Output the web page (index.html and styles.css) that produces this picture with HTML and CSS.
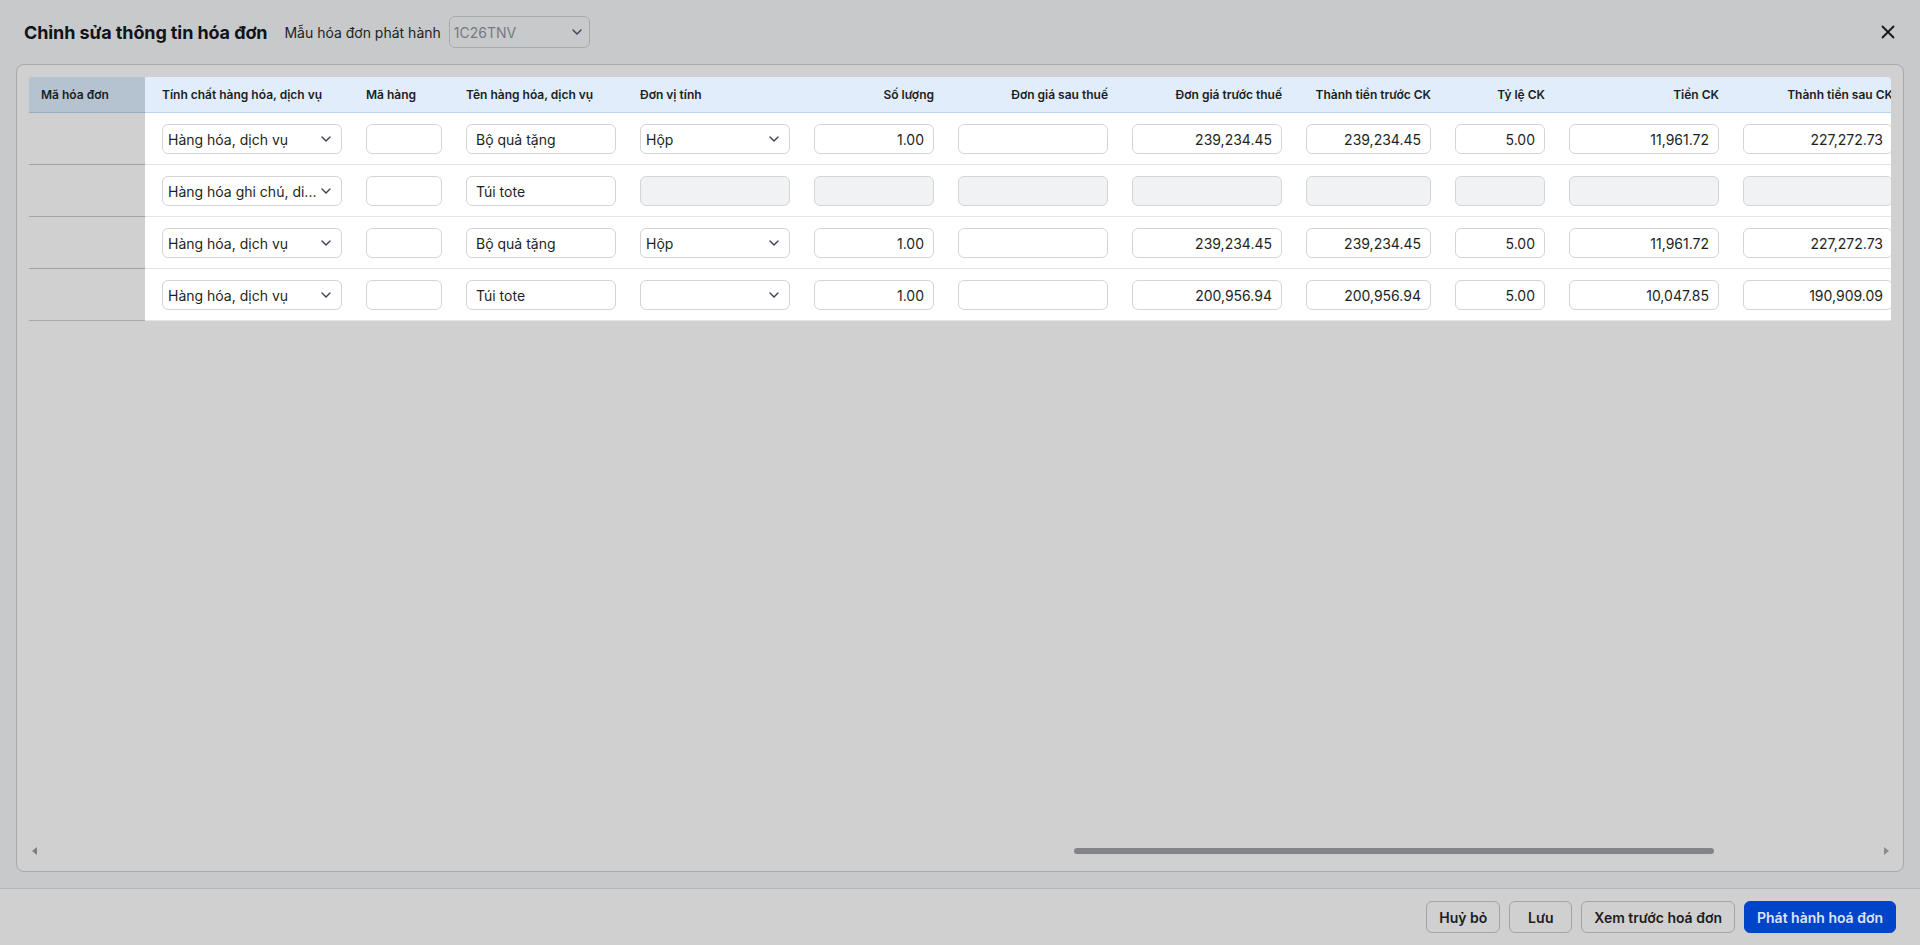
FILE: index.html
```html
<!DOCTYPE html>
<html lang="vi">
<head>
<meta charset="utf-8">
<title>Chỉnh sửa thông tin hóa đơn</title>
<link rel="stylesheet" href="styles.css">
</head>
<body>
<div class="app">
  <header class="top">
    <h1 class="title">Chỉnh sửa thông tin hóa đơn</h1>
    <span class="label">Mẫu hóa đơn phát hành</span>
    <div class="sel sel-template"><span>1C26TNV</span><svg class="chev" width="10" height="6" viewBox="0 0 10 6"><path d="M1 1l4 4 4-4" fill="none" stroke="#374151" stroke-width="1.4" stroke-linecap="round" stroke-linejoin="round"/></svg></div>
    <button class="close" aria-label="Đóng"><svg width="14" height="14" viewBox="0 0 14 14"><path d="M1.5 1.5l11 11M12.5 1.5l-11 11" stroke="#15171a" stroke-width="1.8" stroke-linecap="round"/></svg></button>
  </header>

  <main class="panel">
    <div class="grid-wrap">
      <table class="grid">
        <colgroup>
          <col class="col-fixed">
          <col class="col-kind">
          <col class="col-code">
          <col class="col-w174">
          <col class="col-w174">
          <col class="col-qty">
          <col class="col-w174">
          <col class="col-w174">
          <col class="col-w149">
          <col class="col-rate">
          <col class="col-w174">
          <col class="col-w174">
        </colgroup>
        <thead>
          <tr>
            <th class="fixed">Mã hóa đơn</th>
            <th class="first">Tính chất hàng hóa, dịch vụ</th>
            <th>Mã hàng</th>
            <th>Tên hàng hóa, dịch vụ</th>
            <th>Đơn vị tính</th>
            <th class="num">Số lượng</th>
            <th class="num">Đơn giá sau thuế</th>
            <th class="num">Đơn giá trước thuế</th>
            <th class="num">Thành tiền trước CK</th>
            <th class="num">Tỷ lệ CK</th>
            <th class="num">Tiền CK</th>
            <th class="num">Thành tiền sau CK</th>
          </tr>
        </thead>
        <tbody>
          <tr>
            <td class="fixed"></td>
            <td class="first"><div class="sel"><span class="sel-text">Hàng hóa, dịch vụ</span><svg class="chev" width="10" height="6" viewBox="0 0 10 6"><path d="M1 1l4 4 4-4" fill="none" stroke="#374151" stroke-width="1.4" stroke-linecap="round" stroke-linejoin="round"/></svg></div></td>
            <td><input class="inp" value=""></td>
            <td><input class="inp" value="Bộ quả tặng"></td>
            <td><div class="sel"><span class="sel-text">Hộp</span><svg class="chev" width="10" height="6" viewBox="0 0 10 6"><path d="M1 1l4 4 4-4" fill="none" stroke="#374151" stroke-width="1.4" stroke-linecap="round" stroke-linejoin="round"/></svg></div></td>
            <td><input class="inp num" value="1.00"></td>
            <td><input class="inp num" value=""></td>
            <td><input class="inp num" value="239,234.45"></td>
            <td><input class="inp num" value="239,234.45"></td>
            <td><input class="inp num" value="5.00"></td>
            <td><input class="inp num" value="11,961.72"></td>
            <td><input class="inp num" value="227,272.73"></td>
          </tr>
          <tr>
            <td class="fixed"></td>
            <td class="first"><div class="sel"><span class="sel-text">Hàng hóa ghi chú, di...</span><svg class="chev" width="10" height="6" viewBox="0 0 10 6"><path d="M1 1l4 4 4-4" fill="none" stroke="#374151" stroke-width="1.4" stroke-linecap="round" stroke-linejoin="round"/></svg></div></td>
            <td><input class="inp" value=""></td>
            <td><input class="inp" value="Túi tote"></td>
            <td><div class="inp off"></div></td>
            <td><div class="inp off"></div></td>
            <td><div class="inp off"></div></td>
            <td><div class="inp off"></div></td>
            <td><div class="inp off"></div></td>
            <td><div class="inp off"></div></td>
            <td><div class="inp off"></div></td>
            <td><div class="inp off"></div></td>
          </tr>
          <tr>
            <td class="fixed"></td>
            <td class="first"><div class="sel"><span class="sel-text">Hàng hóa, dịch vụ</span><svg class="chev" width="10" height="6" viewBox="0 0 10 6"><path d="M1 1l4 4 4-4" fill="none" stroke="#374151" stroke-width="1.4" stroke-linecap="round" stroke-linejoin="round"/></svg></div></td>
            <td><input class="inp" value=""></td>
            <td><input class="inp" value="Bộ quả tặng"></td>
            <td><div class="sel"><span class="sel-text">Hộp</span><svg class="chev" width="10" height="6" viewBox="0 0 10 6"><path d="M1 1l4 4 4-4" fill="none" stroke="#374151" stroke-width="1.4" stroke-linecap="round" stroke-linejoin="round"/></svg></div></td>
            <td><input class="inp num" value="1.00"></td>
            <td><input class="inp num" value=""></td>
            <td><input class="inp num" value="239,234.45"></td>
            <td><input class="inp num" value="239,234.45"></td>
            <td><input class="inp num" value="5.00"></td>
            <td><input class="inp num" value="11,961.72"></td>
            <td><input class="inp num" value="227,272.73"></td>
          </tr>
          <tr>
            <td class="fixed"></td>
            <td class="first"><div class="sel"><span class="sel-text">Hàng hóa, dịch vụ</span><svg class="chev" width="10" height="6" viewBox="0 0 10 6"><path d="M1 1l4 4 4-4" fill="none" stroke="#374151" stroke-width="1.4" stroke-linecap="round" stroke-linejoin="round"/></svg></div></td>
            <td><input class="inp" value=""></td>
            <td><input class="inp" value="Túi tote"></td>
            <td><div class="sel"><span class="sel-text"></span><svg class="chev" width="10" height="6" viewBox="0 0 10 6"><path d="M1 1l4 4 4-4" fill="none" stroke="#374151" stroke-width="1.4" stroke-linecap="round" stroke-linejoin="round"/></svg></div></td>
            <td><input class="inp num" value="1.00"></td>
            <td><input class="inp num" value=""></td>
            <td><input class="inp num" value="200,956.94"></td>
            <td><input class="inp num" value="200,956.94"></td>
            <td><input class="inp num" value="5.00"></td>
            <td><input class="inp num" value="10,047.85"></td>
            <td><input class="inp num" value="190,909.09"></td>
          </tr>
        </tbody>
      </table>
    </div>

    <div class="hscroll">
      <span class="arrow-left"></span>
      <div class="track"><div class="thumb" style="margin-left:1032px;width:640px"></div></div>
      <span class="arrow-right"></span>
    </div>
  </main>

  <footer class="foot">
    <button class="btn">Huỷ bỏ</button>
    <button class="btn">Lưu</button>
    <button class="btn">Xem trước hoá đơn</button>
    <button class="btn primary">Phát hành hoá đơn</button>
  </footer>
</div>
</body>
</html>
```

FILE: styles.css
```css
* { box-sizing: border-box; }

body {
  margin: 0;
  font-family: Inter, "Noto Sans", "Liberation Sans", sans-serif;
  background: #c8c9cb;
  color: #1d1f23;
}

.app {
  height: 945px;
  display: flex;
  flex-direction: column;
  overflow: hidden;
}

/* ---------- header ---------- */
.top {
  height: 64px;
  flex: none;
  display: flex;
  align-items: center;
  padding: 0 20px 0 24px;
}

.title {
  margin: 0;
  font-size: 18px;
  font-weight: 700;
  color: #111318;
  letter-spacing: -0.1px;
}

.label {
  margin-left: 17px;
  font-size: 14px;
  color: #1d1f23;
}

.sel {
  display: flex;
  align-items: center;
  justify-content: space-between;
  height: 30px;
  width: 100%;
  border: 1px solid #d2d4d8;
  border-radius: 6px;
  background: #fff;
  padding: 0 10px 0 5px;
  font-size: 14px;
  color: #1d1f23;
}

.sel-text {
  white-space: nowrap;
  overflow: hidden;
}

.chev { flex: none; }

.sel-template {
  margin-left: 8px;
  width: 141px;
  height: 32px;
  background: transparent;
  border-color: #a8a9ad;
  color: #767a81;
  padding: 0 7px 0 4px;
}

.close {
  margin-left: auto;
  width: 24px;
  height: 24px;
  border: 0;
  padding: 0;
  background: none;
  display: flex;
  align-items: center;
  justify-content: center;
}

/* ---------- panel ---------- */
.panel {
  flex: 1;
  min-height: 0;
  margin: 0 16px 16px;
  border: 1px solid #a9aaae;
  border-radius: 8px;
  background: #d0d0d0;
  padding: 12px 12px 0;
  display: flex;
  flex-direction: column;
}

.grid-wrap {
  overflow: hidden;
  border-top-left-radius: 4px;
  border-top-right-radius: 4px;
}

.grid {
  border-collapse: separate;
  border-spacing: 0;
  table-layout: fixed;
  width: 1876px;
}

.col-fixed { width: 116px; }
.col-kind { width: 209px; }
.col-code { width: 100px; }
.col-w174 { width: 174px; }
.col-qty { width: 144px; }
.col-w149 { width: 149px; }
.col-rate { width: 114px; }

.grid th {
  height: 36px;
  padding: 0 12px;
  font-size: 12px;
  font-weight: 600;
  color: #1b1e24;
  text-align: left;
  white-space: nowrap;
  overflow: hidden;
  background: #e1edfb;
  border-bottom: 1px solid #bcd2ed;
}

.grid th.num { text-align: right; }

.grid th.fixed {
  background: #b5c2d0;
  border-bottom: 1px solid #9fb3c9;
  box-shadow: 1px 0 2px rgba(0, 0, 0, 0.12);
}

.grid td {
  padding: 11px 12px 10px;
  background: #fff;
  border-bottom: 1px solid #e4e5e8;
}

.grid td.fixed {
  background: #d0d0d0;
  border-bottom: 1px solid #a9abae;
  box-shadow: 1px 0 2px rgba(0, 0, 0, 0.12);
}

.grid .first { padding-left: 17px; }

.inp {
  display: block;
  width: 100%;
  height: 30px;
  border: 1px solid #d2d4d8;
  border-radius: 6px;
  background: #fff;
  padding: 0 9px;
  font-family: inherit;
  font-size: 14px;
  color: #1d1f23;
  outline: none;
}

.inp.num { text-align: right; }

.inp.off {
  background: #f1f2f4;
  border-color: #d3d5d9;
}

/* ---------- fake horizontal scrollbar ---------- */
.hscroll {
  margin: auto -12px 13px;
  height: 14px;
  display: flex;
  align-items: center;
  padding: 0 14px 0 15px;
}

.arrow-left {
  width: 0;
  height: 0;
  border-top: 4px solid transparent;
  border-bottom: 4px solid transparent;
  border-right: 5px solid #7e7f83;
}

.arrow-right {
  width: 0;
  height: 0;
  border-top: 4px solid transparent;
  border-bottom: 4px solid transparent;
  border-left: 5px solid #8a8b8f;
}

.track {
  flex: 1;
  margin: 0 5px;
  height: 6px;
}

.thumb {
  height: 6px;
  border-radius: 3px;
  background: #838488;
}

/* ---------- footer ---------- */
.foot {
  height: 57px;
  flex: none;
  border-top: 1px solid #b5b6b9;
  background: #d0d0d0;
  display: flex;
  align-items: center;
  justify-content: flex-end;
  gap: 9px;
  padding: 0 24px;
}

.btn {
  height: 32px;
  min-width: 63px;
  padding: 0 12px;
  border: 1px solid #a3a4a8;
  border-radius: 6px;
  background: transparent;
  font-family: inherit;
  font-size: 14px;
  font-weight: 600;
  color: #1c1d20;
}

.btn.primary {
  background: #0044c9;
  border-color: #0044c9;
  color: #dde4f2;
}
```
